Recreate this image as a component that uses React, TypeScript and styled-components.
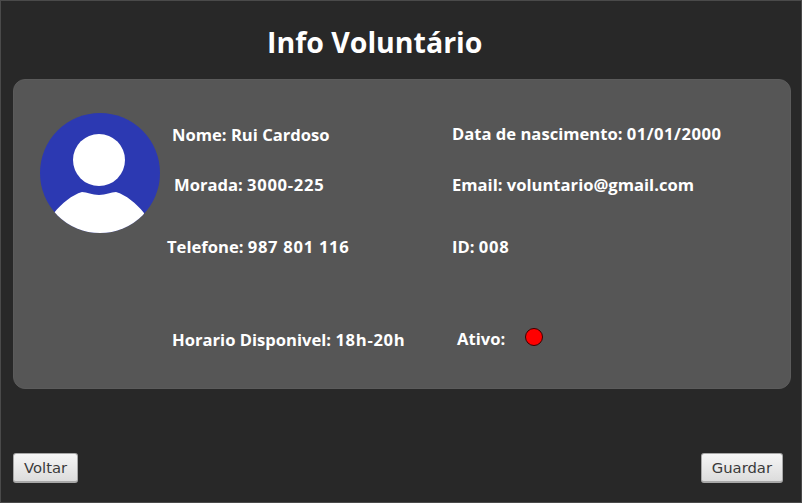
import styled, { createGlobalStyle } from 'styled-components';

const GlobalStyle = createGlobalStyle`
  html, body {
    margin: 0;
    padding: 0;
    background: #282828;
  }
`;

const Window = styled.div`
  box-sizing: border-box;
  width: 802px;
  height: 503px;
  display: flex;
  flex-direction: column;
  padding: 0 10px 19px 12px;
  background: #282828;
  border: 1px solid #4a4a4a;
  font-family: "Open Sans", "Noto Sans", sans-serif;
`;

const Title = styled.h1`
  margin: 0;
  height: 78px;
  padding: 21px 0 0 254px;
  box-sizing: border-box;
  color: #fff;
  font-size: 28.5px;
  line-height: 40px;
  font-weight: 700;
`;

const Card = styled.section`
  box-sizing: border-box;
  width: 778px;
  height: 310px;
  display: flex;
  padding: 33px 0 0 26px;
  background: #565656;
  border-radius: 12px;
  border: 1px solid #5b5b5b;
`;

const Fields = styled.div`
  display: grid;
  grid-template-columns: 285px 1fr;
  grid-template-rows: 45px 50px 62px 93px;
  margin-left: 7px;
`;

const Field = styled.div<{ $indent?: number; $lift?: number }>`
  padding-left: ${props => props.$indent ?? 0}px;
  padding-top: ${props => props.$lift ?? 10}px;
  display: flex;
  align-items: flex-start;
  color: #fff;
  font-size: 16.6px;
  line-height: 24px;
  font-weight: 700;
  white-space: pre;
`;

const Digits = styled.span<{ $tight?: boolean }>`
  letter-spacing: ${props => props.$tight ? 0.5 : 0.7}px;
`;

const StatusDot = styled.span`
  box-sizing: border-box;
  width: 18px;
  height: 18px;
  margin: 1px 0 0 20px;
  border-radius: 50%;
  background: #ff0000;
  border: 1px solid #3a0000;
`;

const Footer = styled.div`
  margin-top: auto;
  padding-right: 8px;
  display: flex;
  justify-content: space-between;
  align-items: flex-end;
`;

const Button = styled.button`
  box-sizing: border-box;
  height: 30px;
  padding: 0 10px;
  border: 1px solid #a8a8a8;
  border-bottom-width: 2px;
  border-radius: 3px;
  background: linear-gradient(#f6f6f6, #dcdcdc);
  color: #3a3a3a;
  font-family: "DejaVu Sans", sans-serif;
  font-size: 14.8px;
`;

const Avatar = () => (
  <svg width="120" height="120" viewBox="0 0 120 120" style={{ flexShrink: 0 }}>
    <defs>
      <clipPath id="avatarClip">
        <circle cx="60" cy="60" r="60" />
      </clipPath>
    </defs>
    <circle cx="60" cy="60" r="60" fill="#2c39b2" />
    <circle cx="59" cy="47" r="26" fill="#fff" />
    <path
      d="M14 100 C22 90 32 82 42 79 C47 79 52 82 59 82 C66 82 71 79 76 79 C86 82 96 90 104 100 L104 125 L14 125 Z"
      fill="#fff"
      clipPath="url(#avatarClip)"
    />
  </svg>
);

export default function App() {
  return (
    <Window>
      <GlobalStyle />
      <Title>Info Voluntário</Title>
      <Card>
        <Avatar />
        <Fields>
          <Field $indent={5}>Nome: Rui Cardoso</Field>
          <Field $lift={9}>Data de nascimento: <Digits $tight>01/01/2000</Digits></Field>
          <Field $indent={7} $lift={15}>Morada: <Digits>3000-225</Digits></Field>
          <Field $lift={15}>Email: voluntario@gmail.com</Field>
          <Field $lift={27}>Telefone: <Digits>987 801 116</Digits></Field>
          <Field $lift={27}>ID: <Digits>008</Digits></Field>
          <Field $indent={5} $lift={58}>Horario Disponivel: <Digits>18h-20h</Digits></Field>
          <Field $indent={5} $lift={57}>
            Ativo:
            <StatusDot />
          </Field>
        </Fields>
      </Card>
      <Footer>
        <Button>Voltar</Button>
        <Button>Guardar</Button>
      </Footer>
    </Window>
  );
}
